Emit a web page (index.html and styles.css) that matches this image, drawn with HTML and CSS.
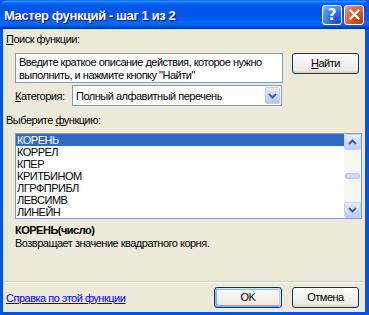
FILE: index.html
```html
<!DOCTYPE html>
<html lang="ru">
<head>
<meta charset="utf-8">
<title>Мастер функций - шаг 1 из 2</title>
<link rel="stylesheet" href="styles.css">
</head>
<body>
<div class="window">
  <div class="titlebar">
    <span class="title">Мастер функций - шаг 1 из 2</span>
    <div class="tbtns">
      <div class="tbtn help">?</div>
      <div class="tbtn close">
        <svg width="11" height="11" viewBox="0 0 11 11"><path d="M1.5 1.5 L9.5 9.5 M9.5 1.5 L1.5 9.5" stroke="#fff" stroke-width="2.2" stroke-linecap="square"/></svg>
      </div>
    </div>
  </div>
  <div class="client">
    <div class="label top"><u>П</u>оиск функции:</div>
    <div class="search-row">
      <div class="searchbox">Введите краткое описание действия, которое нужно выполнить, и нажмите кнопку "Найти"</div>
      <div class="btn find"><u>Н</u>айти</div>
    </div>
    <div class="cat-row">
      <span class="cat-label"><u>К</u>атегория:</span>
      <div class="combo">
        <span class="combo-text">Полный алфавитный перечень</span>
        <div class="combo-btn">
          <svg width="9" height="6" viewBox="0 0 9 6"><path d="M1 1 L4.5 4.5 L8 1" fill="none" stroke="#4d6185" stroke-width="2"/></svg>
        </div>
      </div>
    </div>
    <div class="label choose">Выберите <u>ф</u>ункцию:</div>
    <div class="listbox">
      <div class="items">
        <div class="item sel">КОРЕНЬ</div>
        <div class="item">КОРРЕЛ</div>
        <div class="item">КПЕР</div>
        <div class="item">КРИТБИНОМ</div>
        <div class="item">ЛГРФПРИБЛ</div>
        <div class="item">ЛЕВСИМВ</div>
        <div class="item">ЛИНЕЙН</div>
      </div>
      <div class="vscroll">
        <div class="sbtn">
          <svg width="9" height="6" viewBox="0 0 9 6"><path d="M1 5 L4.5 1.5 L8 5" fill="none" stroke="#4d6185" stroke-width="2"/></svg>
        </div>
        <div class="track"><div class="thumb"></div></div>
        <div class="sbtn">
          <svg width="9" height="6" viewBox="0 0 9 6"><path d="M1 1 L4.5 4.5 L8 1" fill="none" stroke="#4d6185" stroke-width="2"/></svg>
        </div>
      </div>
    </div>
    <div class="sig">КОРЕНЬ(число)</div>
    <div class="desc">Возвращает значение квадратного корня.</div>
    <div class="spacer"></div>
    <div class="sep"></div>
    <div class="bottom-row">
      <a class="link" href="#">Справка по этой функции</a>
      <div class="btns">
        <div class="btn ok">OK</div>
        <div class="btn cancel">Отмена</div>
      </div>
    </div>
  </div>
</div>
</body>
</html>
```
FILE: styles.css
```css
* { box-sizing: border-box; }
html, body { margin: 0; padding: 0; }
body {
  width: 369px;
  height: 315px;
  overflow: hidden;
  font-family: "Liberation Sans", Arial, sans-serif;
  font-size: 11px;
  letter-spacing: -0.5px;
  color: #000;
}
.window {
  width: 369px;
  height: 315px;
  display: flex;
  flex-direction: column;
  background: #0055e5;
}
.titlebar {
  height: 29px;
  flex: none;
  display: flex;
  align-items: center;
  padding: 0 4px 0 4px;
  border-radius: 7px 7px 0 0;
  background: linear-gradient(to bottom, #0058ee 0%, #3593ff 4%, #288eff 6%, #127dff 8%, #036ffc 10%, #0262ee 14%, #0057e5 20%, #0054e3 24%, #0055eb 56%, #005bf5 66%, #026afe 76%, #0062ef 86%, #0052d6 92%, #0040ab 94%, #003092 100%);
}
.title {
  color: #fff;
  font-family: "Liberation Sans", Arial, sans-serif;
  font-weight: bold;
  font-size: 13px;
  letter-spacing: -0.4px;
  text-shadow: 1px 1px #0f1089;
  padding-top: 1px;
}
.tbtns {
  margin-left: auto;
  display: flex;
  gap: 2px;
  margin-right: 1px;
}
.tbtn {
  width: 20px;
  height: 20px;
  border: 1px solid #fff;
  border-radius: 3px;
  display: flex;
  align-items: center;
  justify-content: center;
  color: #fff;
  font-weight: bold;
  font-size: 15px;
  letter-spacing: 0;
  font-family: "DejaVu Sans", sans-serif;
}
.help {
  background: radial-gradient(circle at 80% 85%, #1b4bd8 0%, #2a6df0 40%, #5b97fb 75%, #9ac2ff 100%);
}
.close {
  background: radial-gradient(circle at 85% 85%, #c13d10 0%, #d9522a 40%, #e8774f 75%, #f3a98b 100%);
}
.client {
  flex: 1;
  margin: 0 4px 3px 3px;
  background: #ece9d8;
  display: flex;
  flex-direction: column;
  padding: 0 3px 4px 3px;
}
.label { line-height: 13px; }
.label.top { margin-top: 4px; }
.search-row {
  margin-top: 7px;
  margin-left: 9px;
  display: flex;
  align-items: flex-start;
  gap: 9px;
}
.searchbox {
  width: 268px;
  height: 30px;
  background: #fff;
  border: 1px solid #7f9db9;
  padding: 2px 3px;
  line-height: 13px;
}
.btn {
  height: 21px;
  border: 1px solid #003c74;
  border-radius: 3px;
  background: linear-gradient(to bottom, #ffffff 0%, #f4f3ee 40%, #ecebe6 85%, #d6d0c5 100%);
  display: flex;
  align-items: center;
  justify-content: center;
  line-height: 13px;
}
.find { width: 67px; }
.cat-row {
  margin-top: 2px;
  margin-left: 9px;
  display: flex;
  align-items: center;
  height: 21px;
}
.cat-label { width: 57px; }
.combo {
  width: 210px;
  height: 21px;
  background: #fff;
  border: 1px solid #7f9db9;
  display: flex;
  align-items: center;
  padding: 1px 1px 1px 3px;
}
.combo-text { flex: 1; }
.combo-btn {
  width: 15px;
  height: 17px;
  border: 1px solid #bacbf5;
  border-radius: 2px;
  background: linear-gradient(to bottom, #e1eafe 0%, #c8d6fb 50%, #b4c8f6 100%);
  display: flex;
  align-items: center;
  justify-content: center;
}
.label.choose { margin-top: 8px; }
.listbox {
  margin-top: 6px;
  margin-left: 9px;
  height: 86px;
  border: 1px solid #7f9db9;
  background: #fff;
  display: flex;
}
.items { flex: 1; }
.item {
  height: 12px;
  line-height: 12px;
  padding-left: 1px;
  font-size: 11px;
}
.item.sel { background: #316ac5; color: #fff; }
.vscroll {
  width: 17px;
  display: flex;
  flex-direction: column;
  background: #f6f5f0;
}
.sbtn {
  height: 16px;
  border: 1px solid #c5d3f6;
  border-radius: 2px;
  background: linear-gradient(to bottom, #e5ecfd 0%, #cddbfc 50%, #bccdf8 100%);
  display: flex;
  align-items: center;
  justify-content: center;
}
.track {
  flex: 1;
  display: flex;
  align-items: center;
  justify-content: center;
}
.thumb {
  width: 15px;
  height: 6px;
  border: 1px solid #b3c5f3;
  border-radius: 2px;
  background: #cdd9fa;
}
.sig {
  margin-top: 5px;
  margin-left: 9px;
  font-weight: bold;
  line-height: 13px;
}
.desc {
  margin-left: 9px;
  line-height: 13px;
}
.spacer { flex: 1; }
.sep {
  height: 2px;
  border-top: 1px solid #d0cebf;
  border-bottom: 1px solid #fff;
}
.bottom-row {
  margin-top: 4px;
  display: flex;
  align-items: center;
  height: 21px;
}
.link {
  color: #0000ff;
  text-decoration: underline;
}
.btns {
  margin-left: auto;
  display: flex;
  gap: 10px;
  margin-right: 3px;
}
.ok {
  width: 68px;
  box-shadow: inset -1px 1px #cee7ff, inset 1px 2px #98b8ea, inset -2px 2px #bcd4f6, inset 1px -1px #89ade4, inset 2px -2px #89ade4;
}
.cancel { width: 67px; }
```
